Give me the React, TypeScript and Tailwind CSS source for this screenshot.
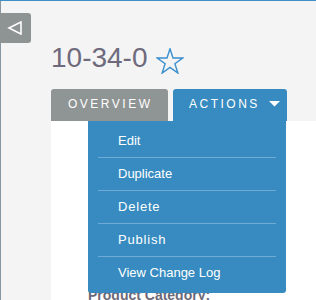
import React from "react";

function Star() {
  return (
    <svg width="28" height="26" viewBox="0 0 28 26" className="block mt-[6px] ml-[8px]">
      <polygon
        points="14,0.8 17.01,10.06 26.74,10.06 18.87,15.78 21.88,25.04 14,19.32 6.12,25.04 9.13,15.78 1.26,10.06 10.99,10.06"
        fill="none"
        stroke="#3a8fcf"
        strokeWidth="1.4"
        strokeLinejoin="miter"
      />
    </svg>
  );
}

const items = ["Edit", "Duplicate", "Delete", "Publish", "View Change Log"];

export default function App() {
  return (
    <div className="relative w-[316px] h-[300px] overflow-hidden bg-[#f4f4f4] border-t border-[#3f8ec6] font-['Liberation_Sans',Arial,sans-serif]">
      <div className="absolute left-0 top-0 bottom-0 w-px bg-[#8796a1]" />
      <button className="absolute left-0 top-[12px] z-10 w-[31px] h-[30px] rounded-r-[3px] bg-[#8e9393] flex items-center justify-center">
        <svg width="16" height="14" viewBox="0 0 16 14" className="block -ml-[1px]">
          <polygon points="2,7 14,1 14,13" fill="none" stroke="#ffffff" strokeWidth="1.6" strokeLinejoin="miter" />
        </svg>
      </button>

      <div className="flex flex-col h-full pl-[51px] pt-[41px]">
        <div className="flex items-start">
          <h1 className="text-[28px] leading-[32px] font-normal text-[#6e6a7c]">10-34-0</h1>
          <Star />
        </div>

        <div className="flex items-end gap-[5px] mt-[15px]">
          <div className="w-[117px] h-[32px] rounded-t-[3px] bg-[#8f9494] pl-[17px] pt-[8px]">
            <span className="block text-[12px] leading-[14px] tracking-[2.5px] text-white">OVERVIEW</span>
          </div>
          <div className="w-[114px] h-[32px] rounded-t-[3px] bg-[#378bc0] pl-[16px] pt-[8px] flex items-start">
            <span className="block text-[12px] leading-[14px] tracking-[2.5px] text-white">ACTIONS</span>
            <svg width="11" height="6" viewBox="0 0 11 6" className="block mt-[4px] ml-[9px]">
              <polygon points="0,0 11,0 5.5,5.5" fill="#ffffff" />
            </svg>
          </div>
        </div>

        <div className="relative flex-1 bg-white pl-[37px] pt-[166px]">
          <p className="text-[14px] leading-[16px] font-bold text-[#6b6878]">Product Category:</p>

          <ul className="absolute left-[37px] top-0 w-[198px] bg-[#378bc0] rounded-b-[3px] py-[4px]">
            {items.map((label, i) => (
              <li key={label}>
                {i > 0 && <div className="h-px mx-[10px] bg-[#6eabd6]" />}
                <div
                  className={
                    "h-[32px] flex items-center pl-[30px] text-[13px] text-white " +
                    (label === "Delete" || label === "Publish" ? "tracking-[0.8px]" : "")
                  }
                >
                  <span>{label}</span>
                </div>
              </li>
            ))}
          </ul>
        </div>
      </div>
    </div>
  );
}
